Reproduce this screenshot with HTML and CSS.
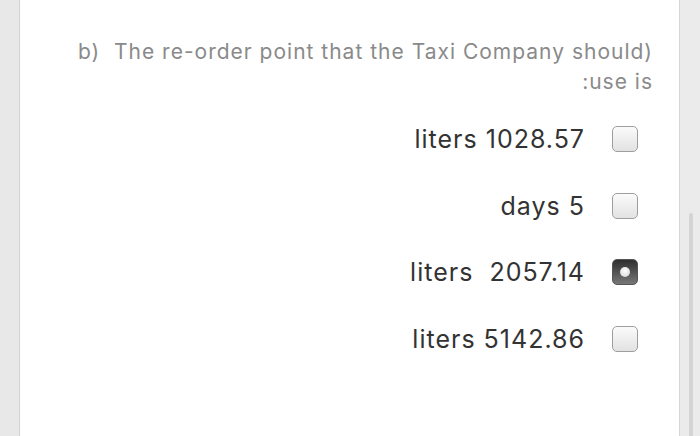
FILE: index.html
```html
<!DOCTYPE html>
<html>
<head>
<meta charset="utf-8">
<link rel="stylesheet" href="styles.css">
</head>
<body>
<div class="page">
  <div class="gutter-left"></div>
  <div class="card">
    <div class="question">
      <p class="q-line">b)&nbsp; The re-order point that the Taxi Company should)</p>
      <p class="q-line">:use is</p>
    </div>
    <div class="options">
      <label class="option"><span class="opt-text">liters 1028.57</span><span class="box"></span></label>
      <label class="option"><span class="opt-text">days 5</span><span class="box"></span></label>
      <label class="option"><span class="opt-text">liters&nbsp; 2057.14</span><span class="box checked"><span class="dot"></span></span></label>
      <label class="option"><span class="opt-text">liters 5142.86</span><span class="box"></span></label>
    </div>
  </div>
  <div class="gutter-right">
    <div class="track"><div class="thumb"></div></div>
  </div>
</div>
</body>
</html>
```
FILE: styles.css
```css
html, body {
  margin: 0;
  padding: 0;
  height: 100%;
  background: #e9e9e9;
}
.page {
  display: flex;
  height: 436px;
  overflow: hidden;
  font-family: Inter, "Liberation Sans", Arial, sans-serif;
}
.gutter-left {
  width: 19px;
  background: #e8e8e8;
  border-right: 1px solid #d2d2d2;
}
.card {
  width: 659px;
  background: #ffffff;
  display: flex;
  flex-direction: column;
}
.gutter-right {
  flex: 1;
  border-left: 1px solid #d6d6d6;
  background: #ebebeb;
  display: flex;
  padding-left: 9px;
}
.track {
  padding-top: 213px;
  width: 4px;
  display: flex;
}
.thumb {
  width: 4px;
  background: #d4d4d4;
  border-radius: 2px 2px 0 0;
}
.question {
  padding: 37px 26px 0 0;
  text-align: right;
  color: #8a8a8a;
  font-size: 21px;
  line-height: 30px;
  letter-spacing: 1px;
}
.q-line {
  margin: 0;
}
.options {
  margin-top: 9px;
  padding-right: 41px;
  display: flex;
  flex-direction: column;
  align-items: flex-end;
}
.option {
  height: 66.5px;
  display: flex;
  align-items: center;
  gap: 27px;
  color: #333333;
  font-size: 25px;
  letter-spacing: 1px;
}
.opt-text {
  white-space: pre;
}
.box {
  width: 24px;
  height: 24px;
  border: 1px solid #9e9e9e;
  border-radius: 5px;
  background: linear-gradient(#fbfbfb, #e2e2e2);
  display: flex;
  align-items: center;
  justify-content: center;
}
.box.checked {
  border-color: #555;
  background: linear-gradient(#2e2e2e, #777777);
}
.dot {
  width: 10px;
  height: 10px;
  border-radius: 50%;
  background: radial-gradient(circle at 50% 40%, #ffffff, #cfcfcf);
}
```
